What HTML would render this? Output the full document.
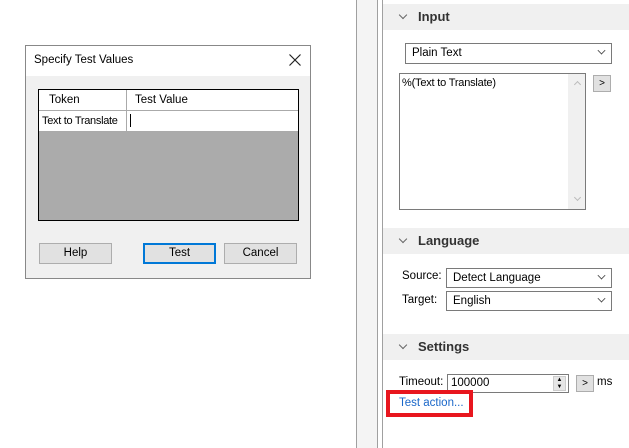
<!DOCTYPE html>
<html><head><style>
*{margin:0;padding:0;box-sizing:border-box}
body{width:629px;height:448px;background:#fff;position:relative;overflow:hidden;font-family:"Liberation Sans",sans-serif;font-size:11.5px;color:#000}
.a{position:absolute}
.btn{position:absolute;background:#e1e1e1;border:1px solid #adadad;text-align:center;line-height:18px}
.dd{position:absolute;border:1px solid #7a7a7a;background:#fff;padding-left:6px;line-height:18px}
.chev{position:absolute;right:6px;width:7px;height:7px;border-right:1px solid #444;border-bottom:1px solid #444;transform:rotate(45deg) scale(.8);top:3px}
.hdr{position:absolute;left:383px;width:246px;height:26px;background:#f0f0f0}
.hdr b{position:absolute;left:35px;top:5px;font-size:13px;color:#333}
.hdr i{position:absolute;left:17px;top:8px;width:6px;height:6px;border-right:1px solid #666;border-bottom:1px solid #666;transform:rotate(45deg)}
</style></head><body>
<div class="a" style="left:356px;top:0;width:1px;height:448px;background:#a0a0a0"></div>
<div class="a" style="left:357px;top:0;width:20px;height:448px;background:#f4f4f4"></div>
<div class="a" style="left:377px;top:0;width:1px;height:448px;background:#a0a0a0"></div>
<div class="a" style="left:382px;top:0;width:1px;height:448px;background:#a0a0a0"></div>

<div class="hdr" style="top:4px"><i></i><b>Input</b></div>
<div class="dd" style="left:405px;top:43px;width:207px;height:21px">Plain Text<span class="chev"></span></div>
<div class="a" style="left:399px;top:73px;width:187px;height:137px;border:1px solid #7a7a7a;background:#fff">
<div class="a" style="left:2px;top:3px;font-size:11px;letter-spacing:-0.2px">%(Text to Translate)</div>
<div class="a" style="right:0;top:0;width:17px;height:135px;background:#f0f0f0"></div>
<div class="a" style="right:5px;top:8px;width:5px;height:5px;border-left:1px solid #bbb;border-top:1px solid #bbb;transform:rotate(45deg)"></div>
<div class="a" style="right:5px;bottom:9px;width:5px;height:5px;border-right:1px solid #bbb;border-bottom:1px solid #bbb;transform:rotate(45deg)"></div>
</div>
<div class="btn" style="left:593px;top:75px;width:18px;height:17px;line-height:15px;font-size:10px">&gt;</div>

<div class="hdr" style="top:228px"><i></i><b>Language</b></div>
<div class="a" style="left:402px;top:270px">Source:</div>
<div class="dd" style="left:446px;top:268px;width:166px;height:20px">Detect Language<span class="chev"></span></div>
<div class="a" style="left:402px;top:294px">Target:</div>
<div class="dd" style="left:446px;top:291px;width:166px;height:20px">English<span class="chev"></span></div>

<div class="hdr" style="top:334px"><i></i><b>Settings</b></div>
<div class="a" style="left:399px;top:376px">Timeout:</div>
<div class="a" style="left:447px;top:374px;width:122px;height:19px;border:1px solid #7a7a7a;background:#fff;padding-left:3px;line-height:17px">100000
<div class="a" style="right:2px;top:1px;width:13px;height:15px;background:#e6e6e6;border:1px solid #ccc;font-size:6px;line-height:7px;text-align:center">▲<br>▼</div></div>
<div class="btn" style="left:576px;top:375px;width:18px;height:17px;line-height:15px;font-size:10px">&gt;</div>
<div class="a" style="left:597px;top:376px">ms</div>
<div class="a" style="left:386px;top:390px;width:87px;height:27px;border:4px solid #e8161e"></div>
<div class="a" style="left:399px;top:397px;color:#1a67c9">Test action...</div>

<div class="a" style="left:25px;top:45px;width:286px;height:234px;border:1px solid #888;background:#f0f0f0">
<div class="a" style="left:0;top:0;width:284px;height:30px;background:#fff"></div>
<div class="a" style="left:8px;top:8px">Specify Test Values</div>
<svg class="a" style="left:263px;top:8px" width="12" height="12"><path d="M0.5 0.5L11.5 11.5M11.5 0.5L0.5 11.5" stroke="#222" stroke-width="1.2"/></svg>
<div class="a" style="left:12px;top:43px;width:261px;height:132px;border:1px solid #000;background:#ababab">
<div class="a" style="left:0;top:0;width:259px;height:41px;background:#fff"></div>
<div class="a" style="left:0;top:20px;width:259px;height:1px;background:#aaa"></div>
<div class="a" style="left:0;top:41px;width:259px;height:1px;background:#aaa"></div>
<div class="a" style="left:87px;top:0;width:1px;height:41px;background:#aaa"></div>
<div class="a" style="left:10px;top:4px">Token</div>
<div class="a" style="left:96px;top:4px">Test Value</div>
<div class="a" style="left:3px;top:25px;font-size:11px;letter-spacing:-0.3px">Text to Translate</div>
<div class="a" style="left:91px;top:24px;width:1px;height:13px;background:#000"></div>
</div>
<div class="btn" style="left:13px;top:197px;width:73px;height:21px">Help</div>
<div class="btn" style="left:117px;top:197px;width:73px;height:21px;border:2px solid #0078d7;line-height:17px">Test</div>
<div class="btn" style="left:198px;top:197px;width:73px;height:21px">Cancel</div>
</div>
</body></html>
